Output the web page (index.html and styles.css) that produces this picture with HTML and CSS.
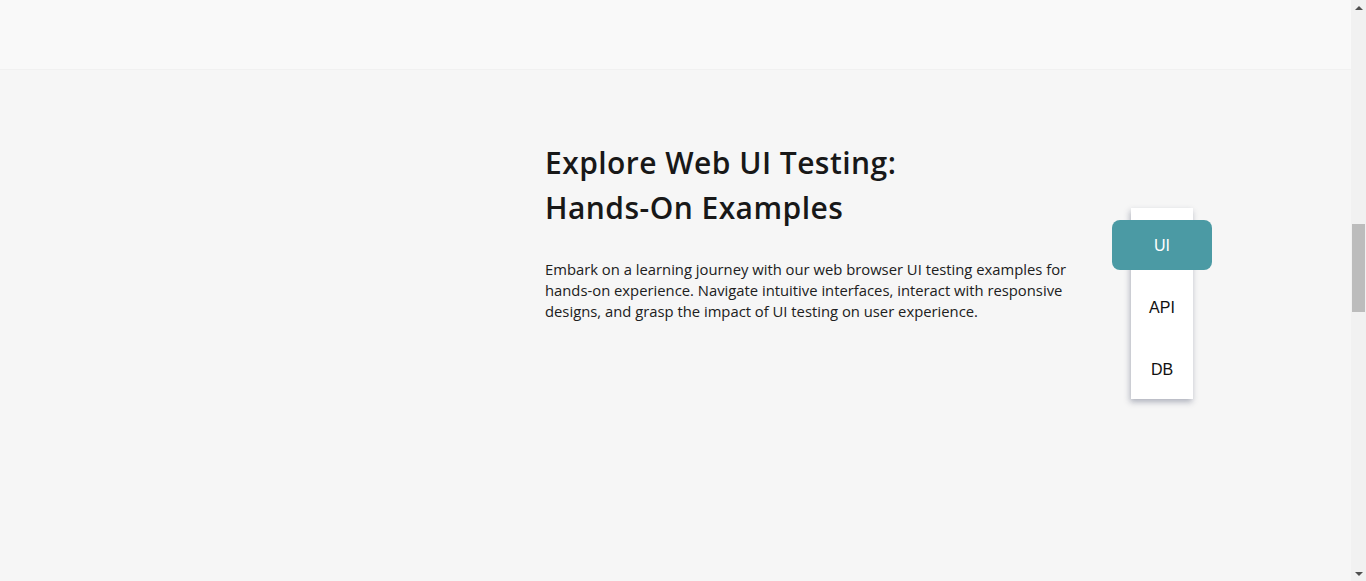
FILE: index.html
```html
<!DOCTYPE html>
<html lang="en">
<head>
<meta charset="utf-8">
<title>Explore Web UI Testing</title>
<link rel="stylesheet" href="styles.css">
</head>
<body>
<div class="page">
  <main class="main">
    <div class="prev-section"></div>
    <section class="explore">
      <div class="explore-grid">
        <div class="media"></div>
        <div class="copy">
          <h2 class="title">Explore Web UI Testing:<br>Hands-On Examples</h2>
          <p class="lead">Embark on a learning journey with our web browser UI testing examples for hands-on experience. Navigate intuitive interfaces, interact with responsive designs, and grasp the impact of UI testing on user experience.</p>
        </div>
        <div class="tabs-col">
          <ul class="tabs">
            <li class="tab"><button class="tab-btn active">UI</button></li>
            <li class="tab"><button class="tab-btn">API</button></li>
            <li class="tab"><button class="tab-btn">DB</button></li>
          </ul>
        </div>
      </div>
    </section>
  </main>
  <div class="scrollbar" aria-hidden="true">
    <span class="sb-arrow sb-up"></span>
    <div class="sb-track"><span class="sb-thumb"></span></div>
    <span class="sb-arrow sb-down"></span>
  </div>
</div>
</body>
</html>
```
FILE: styles.css
```css
html, body {
  margin: 0;
  padding: 0;
  height: 100%;
  overflow: hidden;
}
body {
  background: #f6f6f6;
  font-family: "Open Sans", "Liberation Sans", sans-serif;
  color: #1b1b1b;
}
.page {
  display: flex;
  height: 581px;
}
.main {
  flex: 1;
  display: flex;
  flex-direction: column;
  min-width: 0;
}
.prev-section {
  height: 69px;
  background: #f9f9f9;
  border-bottom: 1px solid #f1f1f1;
}
.explore {
  flex: 1;
  background: #f6f6f6;
}
.explore-grid {
  display: grid;
  grid-template-columns: 518px 540px 100px;
  column-gap: 27px;
  padding-top: 70px;
}
.title {
  margin: 0;
  font-size: 30px;
  line-height: 45px;
  font-weight: 600;
  color: #181818;
  letter-spacing: 0.45px;
}
.lead {
  margin: 29px 0 0;
  font-size: 14.8px;
  line-height: 21px;
  color: #202020;
  width: 530px;
}
.tabs-col {
  padding-top: 68px;
  display: flex;
  justify-content: center;
}
.tabs {
  list-style: none;
  margin: 0;
  padding: 6px 0 0;
  width: 62px;
  height: 185px;
  background: #ffffff;
  box-shadow: -1px 3px 6px rgba(40, 50, 80, 0.35);
  display: flex;
  flex-direction: column;
  align-items: center;
}
.tab {
  height: 62px;
  flex: none;
  display: flex;
  align-items: center;
  justify-content: center;
}
.tab-btn {
  width: 100px;
  height: 50px;
  border: 0;
  background: transparent;
  font-family: "Liberation Sans", Arial, sans-serif;
  font-size: 16px;
  color: #111;
  border-radius: 8px;
  padding: 2px 0 0;
}
.tab-btn.active {
  background: #4b9aa4;
  color: #ffffff;
}
/* classic window scrollbar */
.scrollbar {
  width: 15px;
  flex: none;
  background: #f1f1f1;
  display: flex;
  flex-direction: column;
}
.sb-arrow {
  height: 15px;
  flex: none;
  display: flex;
  align-items: center;
  justify-content: center;
}
.sb-arrow::before {
  content: "";
  width: 0;
  height: 0;
  border-left: 4px solid transparent;
  border-right: 4px solid transparent;
}
.sb-up::before {
  border-bottom: 4px solid #505050;
}
.sb-down::before {
  border-top: 4px solid #505050;
}
.sb-track {
  flex: 1;
  padding-top: 209px;
  display: flex;
  justify-content: center;
}
.sb-thumb {
  width: 13px;
  height: 88px;
  background: #bcbcbc;
}
```
